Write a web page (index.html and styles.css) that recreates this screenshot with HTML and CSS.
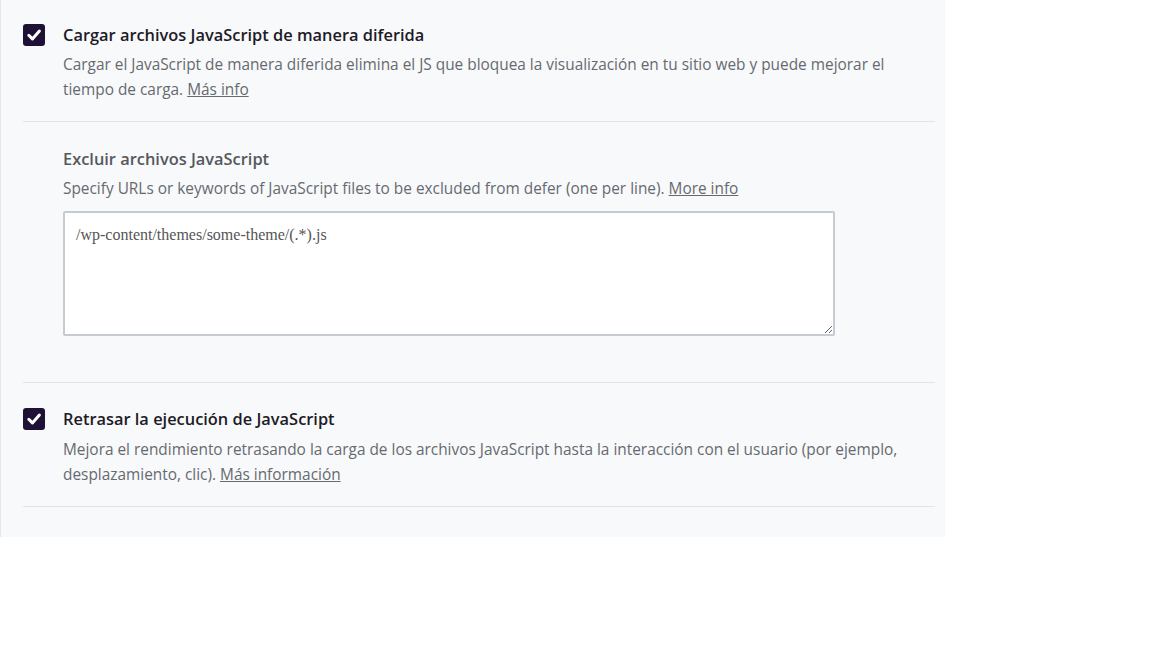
FILE: index.html
```html
<!DOCTYPE HTML>
<html>
	<head>
		<title>Optimización de archivos JavaScript</title>
		<meta charset="utf-8" />
		<meta name="viewport" content="width=device-width, initial-scale=1" />
		<link rel="stylesheet" href="styles.css">
	</head>
	<body>
		<div class="panel">
			<div class="option">
				<span class="checkbox">
					<svg viewBox="0 0 22 22" width="22" height="22"><path d="M5.8 11.3l3.6 3.6L16.4 7" fill="none" stroke="#fff" stroke-width="3" stroke-linecap="round" stroke-linejoin="round"/></svg>
				</span>
				<div class="option-body">
					<div class="option-title">Cargar archivos JavaScript de manera diferida</div>
					<p class="option-desc">Cargar el JavaScript de manera diferida elimina el JS que bloquea la visualización en tu sitio web y puede mejorar el tiempo de carga. <a href="#">Más info</a></p>
				</div>
			</div>

			<div class="sub-option">
				<div class="sub-title">Excluir archivos JavaScript</div>
				<p class="option-desc">Specify URLs or keywords of JavaScript files to be excluded from defer (one per line). <a href="#">More info</a></p>
				<textarea class="exclude-box">/wp-content/themes/some-theme/(.*).js</textarea>
			</div>

			<div class="option">
				<span class="checkbox">
					<svg viewBox="0 0 22 22" width="22" height="22"><path d="M5.8 11.3l3.6 3.6L16.4 7" fill="none" stroke="#fff" stroke-width="3" stroke-linecap="round" stroke-linejoin="round"/></svg>
				</span>
				<div class="option-body">
					<div class="option-title">Retrasar la ejecución de JavaScript</div>
					<p class="option-desc">Mejora el rendimiento retrasando la carga de los archivos JavaScript hasta la interacción con el usuario (por ejemplo, desplazamiento, clic). <a href="#">Más información</a></p>
				</div>
			</div>
		</div>
	</body>
</html>
```

FILE: styles.css
```css
body {
	margin: 0;
	padding: 0;
	background: #fff;
	font-family: "Open Sans", "Noto Sans", Arial, sans-serif;
}

.panel {
	width: 912px;
	background: #f8f9fb;
	border-left: 1px solid #e4e6ea;
	padding: 0 10px 30px 22px;
}

.option {
	display: flex;
	align-items: flex-start;
	gap: 18px;
	padding: 24px 0 19px;
	border-bottom: 1px solid #e2e4e8;
}

.sub-option + .option {
	padding-top: 25px;
}

.sub-option + .option .option-desc {
	margin-top: 7px;
}

.checkbox {
	flex: none;
	width: 22px;
	height: 22px;
	background: #1f1136;
	border-radius: 3px;
	display: flex;
}

.option-body {
	flex: 1;
	padding-right: 20px;
}

.option-title {
	font-size: 16.4px;
	line-height: 22px;
	font-weight: 600;
	color: #1d1b26;
}

.option-desc {
	margin: 6px 0 0;
	font-size: 15.4px;
	line-height: 25px;
	color: #666a70;
}

.option-desc a {
	color: #666a70;
	text-decoration: underline;
}

.sub-option {
	padding: 26px 0 46px 40px;
	border-bottom: 1px solid #e2e4e8;
}

.sub-title {
	font-size: 16.4px;
	line-height: 22px;
	font-weight: 600;
	color: #55585e;
}

.exclude-box {
	display: block;
	box-sizing: border-box;
	width: 772px;
	height: 125px;
	margin-top: 10px;
	padding: 12px 11px;
	background: #fff;
	border: 2px solid #c5cbd1;
	border-radius: 2px;
	font-family: "Liberation Serif", "Times New Roman", serif;
	font-size: 16px;
	line-height: 20px;
	color: #555;
	resize: vertical;
}
```
